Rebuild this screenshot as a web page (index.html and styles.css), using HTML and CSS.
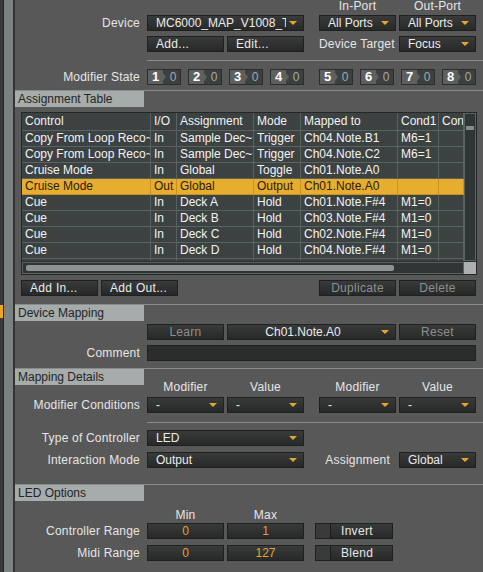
FILE: index.html
```html
<!DOCTYPE html>
<html lang="en">
<head>
    <meta charset="UTF-8">
    <meta name="viewport" content="width=device-width, initial-scale=1.0">
    <title>Controller Manager</title>
    <link rel="stylesheet" href="styles.css">
</head>
<body>
<div class="app">
  <div class="rail">
    <div class="rail-edge"><span class="rail-mark"></span></div>
    <div class="rail-bar"></div>
  </div>

  <div class="panel">
    <!-- device -->
    <div class="row row-head">
      <span class="col-lbl c5">In-Port</span>
      <span class="col-lbl c6">Out-Port</span>
    </div>
    <div class="row mt3">
      <span class="lbl c1">Device</span>
      <div class="drop c23"><span class="txt">MC6000_MAP_V1008_TR</span><i class="arrow"></i></div>
      <div class="drop c5"><span class="txt">All Ports</span><i class="arrow"></i></div>
      <div class="drop c6"><span class="txt">All Ports</span><i class="arrow"></i></div>
    </div>
    <div class="row mt5">
      <div class="btn c2">Add...</div>
      <div class="btn c3">Edit...</div>
      <span class="lbl lbl-in c5">Device Target</span>
      <div class="drop c6"><span class="txt">Focus</span><i class="arrow"></i></div>
    </div>
    <div class="divider mt8"></div>
    <div class="row mt8">
      <span class="lbl c1">Modifier State</span>
      <div class="mods c23">
        <div class="mod"><b>1</b><i></i><span>0</span></div>
        <div class="mod"><b>2</b><i></i><span>0</span></div>
        <div class="mod"><b>3</b><i></i><span>0</span></div>
        <div class="mod"><b>4</b><i></i><span>0</span></div>
      </div>
      <div class="mods c56">
        <div class="mod"><b>5</b><i></i><span>0</span></div>
        <div class="mod"><b>6</b><i></i><span>0</span></div>
        <div class="mod"><b>7</b><i></i><span>0</span></div>
        <div class="mod"><b>8</b><i></i><span>0</span></div>
      </div>
    </div>

    <!-- assignment table -->
    <div class="sect mt5">
      <div class="sect-title">Assignment Table</div>
    </div>
    <div class="grid-box">
      <div class="grid-view">
        <table class="grid">
          <colgroup>
            <col style="width:129px"><col style="width:26px"><col style="width:77px"><col style="width:47px">
            <col style="width:97px"><col style="width:41px"><col style="width:25px">
          </colgroup>
          <tr class="head"><td>Control</td><td>I/O</td><td>Assignment</td><td>Mode</td><td>Mapped to</td><td>Cond1</td><td>Con</td></tr>
          <tr><td>Copy From Loop Reco~</td><td>In</td><td>Sample Dec~</td><td>Trigger</td><td>Ch04.Note.B1</td><td>M6=1</td><td></td></tr>
          <tr><td>Copy From Loop Reco~</td><td>In</td><td>Sample Dec~</td><td>Trigger</td><td>Ch04.Note.C2</td><td>M6=1</td><td></td></tr>
          <tr><td>Cruise Mode</td><td>In</td><td>Global</td><td>Toggle</td><td>Ch01.Note.A0</td><td></td><td></td></tr>
          <tr class="sel"><td>Cruise Mode</td><td>Out</td><td>Global</td><td>Output</td><td>Ch01.Note.A0</td><td></td><td></td></tr>
          <tr><td>Cue</td><td>In</td><td>Deck A</td><td>Hold</td><td>Ch01.Note.F#4</td><td>M1=0</td><td></td></tr>
          <tr><td>Cue</td><td>In</td><td>Deck B</td><td>Hold</td><td>Ch03.Note.F#4</td><td>M1=0</td><td></td></tr>
          <tr><td>Cue</td><td>In</td><td>Deck C</td><td>Hold</td><td>Ch02.Note.F#4</td><td>M1=0</td><td></td></tr>
          <tr><td>Cue</td><td>In</td><td>Deck D</td><td>Hold</td><td>Ch04.Note.F#4</td><td>M1=0</td><td></td></tr>
          <tr class="partial"><td></td><td></td><td></td><td></td><td></td><td></td><td></td></tr>
        </table>
      </div>
      <div class="vscroll"><span></span></div>
      <div class="hscroll"><span></span></div>
      <div class="corner"></div>
    </div>
    <div class="row-btns mt5">
      <div class="btn">Add In...</div>
      <div class="btn">Add Out...</div>
      <div class="btn off push">Duplicate</div>
      <div class="btn off">Delete</div>
    </div>

    <!-- device mapping -->
    <div class="sect mt8">
      <div class="sect-title">Device Mapping</div>
    </div>
    <div class="row mt3">
      <div class="btn off c2">Learn</div>
      <div class="drop drop-mid c3-5"><span class="txt">Ch01.Note.A0</span><i class="arrow"></i></div>
      <div class="btn off c6">Reset</div>
    </div>
    <div class="row mt5">
      <span class="lbl c1">Comment</span>
      <div class="field c-all"></div>
    </div>

    <!-- mapping details -->
    <div class="sect mt7">
      <div class="sect-title">Mapping Details</div>
    </div>
    <div class="row row-cols">
      <span class="col-lbl c2">Modifier</span>
      <span class="col-lbl c3">Value</span>
      <span class="col-lbl c5">Modifier</span>
      <span class="col-lbl c6">Value</span>
    </div>
    <div class="row mt4">
      <span class="lbl c1">Modifier Conditions</span>
      <div class="drop c2"><span class="txt">-</span><i class="arrow"></i></div>
      <div class="drop c3"><span class="txt">-</span><i class="arrow"></i></div>
      <div class="drop c5"><span class="txt">-</span><i class="arrow"></i></div>
      <div class="drop c6"><span class="txt">-</span><i class="arrow"></i></div>
    </div>
    <div class="divider mt9"></div>
    <div class="row mt7">
      <span class="lbl c1">Type of Controller</span>
      <div class="drop c23"><span class="txt">LED</span><i class="arrow"></i></div>
    </div>
    <div class="row mt6">
      <span class="lbl c1">Interaction Mode</span>
      <div class="drop c23"><span class="txt">Output</span><i class="arrow"></i></div>
      <span class="lbl lbl-in2 c5">Assignment</span>
      <div class="drop c6"><span class="txt">Global</span><i class="arrow"></i></div>
    </div>

    <!-- led options -->
    <div class="sect mt16">
      <div class="sect-title">LED Options</div>
    </div>
    <div class="row row-cols mt8">
      <span class="col-lbl c2">Min</span>
      <span class="col-lbl c3">Max</span>
    </div>
    <div class="row mt2">
      <span class="lbl c1">Controller Range</span>
      <div class="num c2">0</div>
      <div class="num c3">1</div>
      <div class="tog c5"><i></i><span>Invert</span></div>
    </div>
    <div class="row mt6">
      <span class="lbl c1">Midi Range</span>
      <div class="num c2">0</div>
      <div class="num c3">127</div>
      <div class="tog c5"><i></i><span>Blend</span></div>
    </div>
  </div>
</div>
</body>
</html>
```

FILE: styles.css
```css
body{
    margin: 0;
    background-color: #585858;
    font-family: "Liberation Sans", Arial, sans-serif;
    font-size: 12px;
    color: #e6e6e6;
    overflow: hidden;
}

.app{
    display: flex;
    height: 100vh;
}

/* left rail */
.rail{
    display: flex;
    width: 15px;
    flex-shrink: 0;
}
.rail-edge{
    width: 3px;
    background-color: #3a3a3a;
    border-right: 1px solid #262626;
}
.rail-mark{
    display: block;
    height: 13px;
    margin-top: 305px;
    background-color: #f0a51e;
}
.rail-bar{
    width: 9px;
    background-color: #7b8080;
    border-right: 2px solid #343434;
}

.panel{
    flex: 1;
    display: flex;
    flex-direction: column;
}

/* rows */
.row{
    display: grid;
    grid-template-columns: 129px 77px 77px 9px 77px 77px;
    grid-template-rows: 100%;
    column-gap: 3px;
    height: 16px;
}
.row-head{
    height: 12px;
}
.row-cols{
    height: 12px;
    margin-top: -4px;
}
.row-btns{
    display: flex;
    gap: 3px;
    height: 16px;
    padding: 0 7px 0 6px;
}
.row-btns .btn{
    width: 77px;
}
.row-btns .push{
    margin-left: auto;
}

.mt2{ margin-top: 2px; }
.mt3{ margin-top: 3px; }
.mt4{ margin-top: 4px; }
.mt5{ margin-top: 5px; }
.mt6{ margin-top: 6px; }
.mt7{ margin-top: 7px; }
.mt8{ margin-top: 8px; }
.mt9{ margin-top: 9px; }
.mt16{ margin-top: 16px; }
.row-cols.mt8{ margin-top: 8px; }

.lbl{
    text-align: right;
    padding-right: 4px;
    line-height: 16px;
    letter-spacing: 0.2px;
    white-space: nowrap;
}
.lbl-in{
    padding-right: 3px;
}
.lbl-in2{
    padding-right: 6px;
}
.col-lbl{
    text-align: center;
    line-height: 12px;
    letter-spacing: 0.2px;
}

.c1{ grid-column: 1; }
.c2{ grid-column: 2; }
.c3{ grid-column: 3; }
.c5{ grid-column: 5; }
.c6{ grid-column: 6; }
.c23{ grid-column: 2 / 4; }
.c56{ grid-column: 5 / 7; }
.c3-5{ grid-column: 3 / 6; }
.c-all{ grid-column: 2 / 7; }

.divider{
    height: 1px;
    margin-left: 132px;
    background-color: #8b8b8b;
}

/* controls */
.drop, .btn, .field, .num, .tog{
    box-sizing: border-box;
    border: 1px solid #1f2020;
    background: linear-gradient(#393a3a, #272828);
    line-height: 14px;
    white-space: nowrap;
    overflow: hidden;
}
.drop{
    display: flex;
    align-items: center;
}
.drop .txt{
    flex: 1;
    overflow: hidden;
    padding-left: 8px;
    color: #ececec;
}
.drop-mid .txt{
    text-align: center;
    padding-left: 0;
}
.arrow{
    flex-shrink: 0;
    width: 0;
    height: 0;
    margin: 0 6px 0 3px;
    border-left: 4px solid transparent;
    border-right: 4px solid transparent;
    border-top: 4px solid #e5a630;
}
.btn{
    padding-left: 8px;
    color: #ececec;
    letter-spacing: 0.3px;
}
.btn.off{
    padding-left: 0;
    text-align: center;
    color: #8e8f8f;
}
.field{
    background: #2b2c2c;
}
.num{
    text-align: center;
    color: #e7a22c;
}
.tog{
    display: flex;
    margin-left: -4px;
    margin-right: 3px;
}
.tog i{
    width: 14px;
    flex-shrink: 0;
    background-color: #393a3a;
    border-right: 1px solid #1b1b1b;
}
.tog span{
    padding-left: 10px;
    letter-spacing: 0.3px;
}

/* modifier state */
.mods{
    display: flex;
    gap: 7px;
}
.mod{
    display: flex;
    align-items: center;
    width: 34px;
    box-sizing: border-box;
    border: 1px solid #2b2d2d;
    background-color: #3d4040;
    line-height: 14px;
}
.mod b{
    width: 15px;
    align-self: stretch;
    text-align: center;
    background-color: #5e6060;
    color: #fff;
    font-size: 13px;
}
.mod i{
    width: 0;
    height: 0;
    border-top: 4px solid transparent;
    border-bottom: 4px solid transparent;
    border-left: 3px solid #5e6060;
}
.mod span{
    flex: 1;
    text-align: center;
    color: #a5a7a7;
}

/* sections */
.sect{
    border-top: 1px solid #8b8b8b;
}
.sect-title{
    width: 126px;
    height: 16px;
    line-height: 16px;
    padding-left: 3px;
    background-color: #a6abab;
    color: #252525;
}

/* assignment table */
.grid-box{
    display: grid;
    grid-template-columns: 442px 12px;
    grid-template-rows: 148px 12px;
    row-gap: 1px;
    margin: 5px 6px 0 6px;
    border: 1px solid #262828;
    background-color: #2c3030;
}
.grid-view{
    overflow: hidden;
    background-color: #3c4242;
}
.grid{
    table-layout: fixed;
    width: 442px;
    border-collapse: separate;
    border-spacing: 0;
}
.grid td{
    box-sizing: border-box;
    height: 16px;
    line-height: 15px;
    padding: 0 0 0 3px;
    border-right: 1px solid #5a6161;
    border-bottom: 1px solid #5a6161;
    white-space: nowrap;
    overflow: hidden;
    color: #f2f2f2;
}
.grid .head td{
    height: 18px;
    line-height: 17px;
}
.grid .sel td{
    background-color: #e6ad2f;
    color: #2a220b;
    border-bottom-color: #c8921f;
    border-right-color: #c8921f;
}
.vscroll{
    border: 1px solid #5b6262;
    background-color: #303434;
}
.vscroll span{
    display: block;
    height: 4px;
    margin: 12px 1px 0 1px;
    background-color: #868b8b;
}
.hscroll{
    box-sizing: border-box;
    padding: 2px 3px;
    border: 1px solid #5b6262;
    background-color: #303434;
}
.hscroll span{
    display: block;
    width: 368px;
    height: 6px;
    border-radius: 2px;
    background-color: #8d9292;
}
.corner{
    background-color: #adb0b0;
}
```
